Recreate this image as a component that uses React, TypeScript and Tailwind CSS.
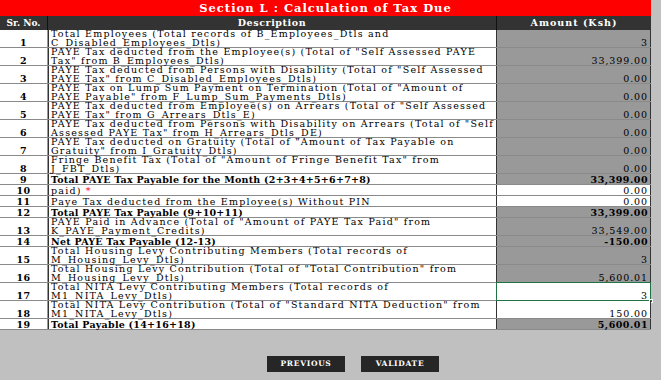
import React from "react";

type Row = {
  no: string;
  lines: React.ReactNode[];
  amount: string;
  bold?: boolean;
  input?: boolean;
  selected?: boolean;
};

const rows: Row[] = [
  { no: "1", lines: ["Total Employees (Total records of B_Employees_Dtls and", "C_Disabled_Employees_Dtls)"], amount: "3" },
  { no: "2", lines: ['PAYE Tax deducted from the Employee(s) (Total of "Self Assessed PAYE', 'Tax" from B_Employees_Dtls)'], amount: "33,399.00" },
  { no: "3", lines: ['PAYE Tax deducted from Persons with Disability (Total of "Self Assessed', 'PAYE Tax" from C_Disabled_Employees_Dtls)'], amount: "0.00" },
  { no: "4", lines: ['PAYE Tax on Lump Sum Payment on Termination (Total of "Amount of', 'PAYE Payable" from F_Lump_Sum_Payments_Dtls)'], amount: "0.00" },
  { no: "5", lines: ['PAYE Tax deducted from Employee(s) on Arrears (Total of "Self Assessed', 'PAYE Tax" from G_Arrears_Dtls_E)'], amount: "0.00" },
  { no: "6", lines: ['PAYE Tax deducted from Persons with Disability on Arrears (Total of "Self', 'Assessed PAYE Tax" from H_Arrears_Dtls_DE)'], amount: "0.00" },
  { no: "7", lines: ['PAYE Tax deducted on Gratuity (Total of "Amount of Tax Payable on', 'Gratuity" from I_Gratuity_Dtls)'], amount: "0.00" },
  { no: "8", lines: ['Fringe Benefit Tax (Total of "Amount of Fringe Benefit Tax" from', "J_FBT_Dtls)"], amount: "0.00" },
  { no: "9", lines: ["Total PAYE Tax Payable for the Month (2+3+4+5+6+7+8)"], amount: "33,399.00", bold: true },
  {
    no: "10",
    lines: [
      <>
        paid) <span className="text-[#ff0000]">*</span>
      </>,
    ],
    amount: "0.00",
    input: true,
  },
  { no: "11", lines: ["Paye Tax deducted from the Employee(s) Without PIN"], amount: "0.00", input: true },
  { no: "12", lines: ["Total PAYE Tax Payable (9+10+11)"], amount: "33,399.00", bold: true },
  { no: "13", lines: ['PAYE Paid in Advance (Total of "Amount of PAYE Tax Paid" from', "K_PAYE_Payment_Credits)"], amount: "33,549.00" },
  { no: "14", lines: ["Net PAYE Tax Payable (12-13)"], amount: "-150.00", bold: true },
  { no: "15", lines: ["Total Housing Levy Contributing Members (Total records of", "M_Housing_Levy_Dtls)"], amount: "3" },
  { no: "16", lines: ['Total Housing Levy Contribution (Total of "Total Contribution" from', "M_Housing_Levy_Dtls)"], amount: "5,600.01" },
  { no: "17", lines: ["Total NITA Levy Contributing Members (Total records of", "M1_NITA_Levy_Dtls)"], amount: "3", input: true, selected: true },
  { no: "18", lines: ['Total NITA Levy Contribution (Total of "Standard NITA Deduction" from', "M1_NITA_Levy_Dtls)"], amount: "150.00", input: true },
  { no: "19", lines: ["Total Payable (14+16+18)"], amount: "5,600.01", bold: true },
];

const App: React.FC = () => {
  return (
    <div
      className="w-[661px] h-[380px] bg-[#c0c0c0] overflow-hidden text-black"
      style={{ fontFamily: '"DejaVu Serif", "Liberation Serif", serif' }}
    >
      <div className="w-[651px] bg-white">
        <div className="h-[16px] bg-[#ff0000] text-white font-bold text-[11.5px] tracking-[1px] leading-[16px] text-center">
          Section L : Calculation of Tax Due
        </div>
        <div className="flex h-[14px] bg-[#333333] text-white font-bold text-[9px] leading-[14px]">
          <div className="w-[48px] text-center border-r border-[#111]">Sr. No.</div>
          <div className="w-[449px] text-center border-r border-[#111] text-[9.5px] tracking-[0.6px]">Description</div>
          <div className="flex-1 text-center text-[9.5px] tracking-[1px]">Amount (Ksh)</div>
        </div>
        {rows.map((r) => {
          const two = r.lines.length > 1;
          const textCls = r.bold ? "font-bold tracking-[0.25px]" : "tracking-[1.2px]";
          return (
            <div
              key={r.no}
              className={`flex border-b border-[#8a8a8a] text-[9.5px] leading-[8.5px] ${two ? "h-[18px]" : "h-[11px]"}`}
            >
              <div className="w-[48px] flex items-end justify-center font-bold tracking-[0.3px] border-r border-[#9a9a9a]">
                {r.no}
              </div>
              <div
                className={`w-[449px] flex flex-col justify-end pl-[2px] border-l border-[#333] border-r border-r-[#333] overflow-x-clip whitespace-nowrap ${textCls}`}
              >
                {r.lines.map((l, i) => (
                  <div key={i}>{l}</div>
                ))}
              </div>
              <div
                className={`relative flex-1 flex items-end justify-end pr-[2px] border-r border-[#333] ${r.input ? "bg-white" : "bg-[#999999]"} ${r.bold ? "font-bold tracking-[0.5px]" : "tracking-[0.9px]"}`}
              >
                {r.amount}
                {r.selected && (
                  <>
                    <div className="absolute inset-[-1px] border-[1.5px] border-[#217346]" />
                    <div className="absolute right-[-3px] bottom-[-3px] w-[4px] h-[4px] bg-[#217346] border border-white" />
                  </>
                )}
              </div>
            </div>
          );
        })}
      </div>
      <div className="flex gap-[16px] pt-[26px] pl-[267px]">
        <button className="w-[78px] h-[16px] bg-[#262626] text-white font-bold text-[7.5px] tracking-[0.7px]">
          PREVIOUS
        </button>
        <button className="w-[78px] h-[16px] bg-[#262626] text-white font-bold text-[7.5px] tracking-[0.7px]">
          VALIDATE
        </button>
      </div>
    </div>
  );
};

export default App;
